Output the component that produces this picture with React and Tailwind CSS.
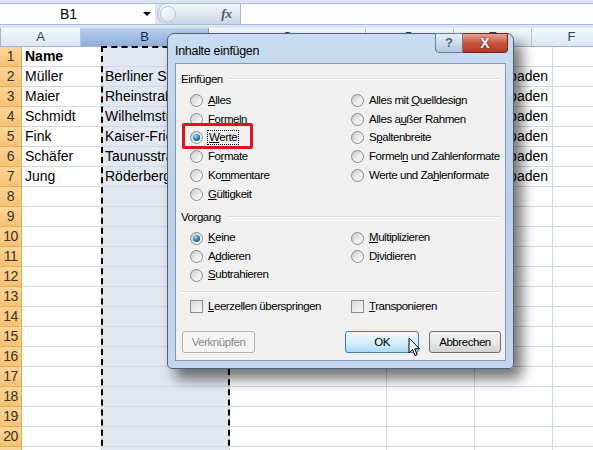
import React from "react";

const SHEET_FONT = { fontFamily: '"Liberation Sans", Arial, sans-serif' };

const COLS = [
  { key: "A", cls: "w-[80px]" },
  { key: "B", cls: "w-[128px]" },
  { key: "C", cls: "w-[157px]" },
  { key: "D", cls: "w-[88px]" },
  { key: "E", cls: "w-[78px]" },
  { key: "F", cls: "w-[80px]" },
];

const ROWS = [
  { a: "Name", b: "", e: "", bold: true },
  { a: "Müller", b: "Berliner Straße 12", e: "Wiesbaden" },
  { a: "Maier", b: "Rheinstraße 4", e: "Wiesbaden" },
  { a: "Schmidt", b: "Wilhelmstraße 9", e: "Wiesbaden" },
  { a: "Fink", b: "Kaiser-Friedrich-Ring 3", e: "Wiesbaden" },
  { a: "Schäfer", b: "Taunusstraße 21", e: "Wiesbaden" },
  { a: "Jung", b: "Röderbergweg 7", e: "Wiesbaden" },
];

function FormulaBar() {
  return (
    <div className="h-[28px] bg-[#dbe5f1] pt-[3px]">
      <div className="flex h-[22px] border-y border-[#a9bdd6]">
        <div className="relative flex w-[155px] items-center justify-center bg-white pr-[18px] text-[14px] text-black">
          B1
          <span className="absolute right-[4px] top-[8px] h-0 w-0 border-x-[4px] border-t-[4px] border-x-transparent border-t-black" />
        </div>
        <div className="w-[2px] bg-[#dbe5f1]" />
        <div className="flex w-[83px] items-center rounded-l-full border-l border-[#a5b9d1] bg-gradient-to-b from-[#f4f7fb] to-[#c7d5e8] pl-[2px] pr-[8px]">
          <span className="h-[16px] w-[16px] rounded-full border border-[#b7c7db] bg-gradient-to-br from-white to-[#d7e1ee]" />
          <span className="ml-auto text-[13px] font-bold italic text-[#555]" style={{ fontFamily: '"Liberation Serif", serif' }}>
            fx
          </span>
        </div>
        <div className="flex-1 border-l border-[#a5b9d1] bg-white" />
      </div>
    </div>
  );
}

function HeaderRow() {
  return (
    <div className="flex h-[19px] border-b border-[#9eb6ce]">
      <div className="relative w-[22px] border-r border-[#9eb6ce] bg-gradient-to-b from-[#e9eff7] to-[#d5dfed]">
        <span className="absolute bottom-[2px] right-[2px] h-0 w-0 border-b-[11px] border-l-[11px] border-b-[#b5c4d7] border-l-transparent" />
      </div>
      {COLS.map((c) => (
        <div
          key={c.key}
          className={`${c.cls} flex shrink-0 items-center justify-center border-r text-[13px] ${
            c.key === "B"
              ? "border-[#7f9dc6] bg-gradient-to-b from-[#b9cfec] to-[#8eaedb] text-[#15294b]"
              : "border-[#b6c7dc] bg-gradient-to-b from-[#f5f8fc] to-[#dce5f1] text-[#27415f]"
          }`}
        >
          {c.key}
        </div>
      ))}
    </div>
  );
}

function Row({ n, data }) {
  return (
    <div className="flex h-[20px] text-[14px]">
      <div className="flex w-[22px] shrink-0 items-center justify-center border-b border-r border-[#e0ad5c] bg-gradient-to-b from-[#fbd598] to-[#f6c274] text-[14px] tracking-[-0.5px] text-[#3d3220]">
        {n}
      </div>
      {COLS.map((c) => {
        let text = "";
        if (data) {
          if (c.key === "A") text = data.a;
          if (c.key === "B") text = data.b;
          if (c.key === "E") text = data.e;
        }
        return (
          <div
            key={c.key}
            className={`${c.cls} flex shrink-0 items-center overflow-hidden whitespace-nowrap border-b border-r border-[#d0d7e5] pl-[3px] ${
              c.key === "B" ? "bg-[#e2e7f0]" : "bg-white"
            } ${data && data.bold && c.key === "A" ? "font-bold" : ""}`}
          >
            {text}
          </div>
        );
      })}
    </div>
  );
}

function Radio({ checked }) {
  return (
    <span className="flex h-[13px] w-[13px] shrink-0 items-center justify-center rounded-full border border-[#8c8c8c] bg-gradient-to-br from-[#c8c8c8] via-[#e9e9e9] to-white">
      {checked && (
        <span className="h-[7px] w-[7px] rounded-full bg-[radial-gradient(circle_at_35%_30%,#9edbff,#2a82c8_50%,#0b3a66)]" />
      )}
    </span>
  );
}

function Check() {
  return (
    <span className="h-[13px] w-[13px] shrink-0 border border-[#8c8c8c] bg-gradient-to-br from-[#d8d8d8] to-[#fafafa]" />
  );
}

function Opt({ children, checked, focus }) {
  return (
    <div className="flex h-[18.8px] items-center gap-[5px]">
      <Radio checked={checked} />
      <span className={focus ? "outline outline-1 outline-dotted outline-black px-[1px] leading-[13px]" : ""}>{children}</span>
    </div>
  );
}

function GroupLabel({ children }) {
  return (
    <div className="flex items-center gap-[6px] pl-[5px] pr-[4px]">
      <span className="leading-[14px]">{children}</span>
      <span className="h-[2px] flex-1 border-b border-t border-b-white border-t-[#d5dfe5]" />
    </div>
  );
}

function Dialog() {
  return (
    <div
      className="absolute left-[167px] top-[33px] flex h-[336px] w-[347px] flex-col rounded-t-[7px] rounded-b-[5px] border border-[#4f6077] bg-gradient-to-b from-[#c9dcf1] via-[#b9d0ea] to-[#c2d7ee] px-[7px] pb-[7px] shadow-[8px_10px_14px_rgba(0,0,0,0.55)]"
      style={{ fontFamily: '"Liberation Sans", Arial, sans-serif' }}
    >
      <div className="flex h-[29px] items-start">
        <span className="mt-[8px] text-[12.5px] tracking-[-0.3px] text-black">Inhalte einfügen</span>
        <div className="-mt-px ml-auto -mr-[2px] flex">
          <div className="flex h-[20px] w-[28px] items-center justify-center rounded-bl-[4px] border border-[#6a7b92] bg-gradient-to-b from-[#e6eef8] to-[#b4c7df] text-[13px] font-bold text-[#4b5c74]">
            ?
          </div>
          <div className="flex h-[20px] w-[45px] items-center justify-center rounded-br-[4px] border border-l-0 border-[#6b2a20] bg-gradient-to-b from-[#e8a595] via-[#c9523e] to-[#b23a25] text-[14px] font-bold text-white [text-shadow:0_0_2px_#5a1208]">
            X
          </div>
        </div>
      </div>
      <div className="relative flex-1 border border-[#8498b3] bg-[#f0f0f0] text-[11.5px] tracking-[-0.45px] text-black">
        <div className="mt-[8px]">
          <GroupLabel>Einfügen</GroupLabel>
        </div>
        <div className="mt-[5px] flex pl-[14px]">
          <div className="w-[161px]">
            <Opt><u>A</u>lles</Opt>
            <Opt>F<u>o</u>rmeln</Opt>
            <Opt checked focus><u>W</u>erte</Opt>
            <Opt>Fo<u>r</u>mate</Opt>
            <Opt>Ko<u>m</u>mentare</Opt>
            <Opt><u>G</u>ültigkeit</Opt>
          </div>
          <div>
            <Opt>Alles mit <u>Q</u>uelldesign</Opt>
            <Opt>Alles a<u>u</u>ßer Rahmen</Opt>
            <Opt>S<u>p</u>altenbreite</Opt>
            <Opt>Formel<u>n</u> und Zahlenformate</Opt>
            <Opt>Werte und Za<u>h</u>lenformate</Opt>
          </div>
        </div>
        <div className="mt-[6px]">
          <GroupLabel>Vorgang</GroupLabel>
        </div>
        <div className="mt-[5px] flex pl-[14px]">
          <div className="w-[161px] [&>div]:h-[18.5px]">
            <Opt checked><u>K</u>eine</Opt>
            <Opt>A<u>d</u>dieren</Opt>
            <Opt><u>S</u>ubtrahieren</Opt>
          </div>
          <div className="[&>div]:h-[18.5px]">
            <Opt><u>M</u>ultiplizieren</Opt>
            <Opt>D<u>i</u>vidieren</Opt>
          </div>
        </div>
        <div className="mx-[5px] mr-[4px] mt-[7px] h-[2px] border-b border-t border-b-white border-t-[#d5dfe5]" />
        <div className="mt-[4px] flex h-[19px] items-center pl-[14px]">
          <div className="flex w-[161px] items-center gap-[5px]">
            <Check />
            <span><u>L</u>eerzellen überspringen</span>
          </div>
          <div className="flex items-center gap-[5px]">
            <Check />
            <span><u>T</u>ransponieren</span>
          </div>
        </div>
        <div className="mt-[15px] flex pl-[6px]">
          <div className="flex h-[22px] w-[73px] items-center justify-center rounded-[3px] border border-[#adb2b5] bg-[#f4f4f4] text-[#8a8a8a]">
            Verknüpfen
          </div>
          <div className="ml-[90px] flex h-[22px] w-[74px] items-center justify-center rounded-[3px] border border-[#3c7fb1] bg-gradient-to-b from-[#ecf7fd] via-[#d9f0fc] to-[#a9daf5]">
            OK
          </div>
          <div className="ml-[10px] flex h-[22px] w-[72px] items-center justify-center rounded-[3px] border border-[#707070] bg-gradient-to-b from-[#f3f3f3] via-[#e8e8e8] to-[#d3d3d3]">
            Abbrechen
          </div>
        </div>
        <div className="pointer-events-none absolute left-[6px] top-[59px] h-[26px] w-[71px] rounded-[2px] border-[3px] border-[#e0121c]" />
        <svg className="pointer-events-none absolute left-[232px] top-[273px]" width="13" height="21" viewBox="0 0 13 21">
          <path d="M1 1 L1 16 L4.5 12.5 L7 18.5 L9.2 17.6 L6.8 11.8 L11.5 11.8 Z" fill="white" stroke="black" strokeWidth="1" strokeLinejoin="round" />
        </svg>
      </div>
    </div>
  );
}

export default function App() {
  const rows = Array.from({ length: 21 }, (_, i) => i + 1);
  return (
    <div className="relative h-[450px] w-[593px] overflow-hidden bg-white" style={SHEET_FONT}>
      <FormulaBar />
      <HeaderRow />
      {rows.map((n) => (
        <Row key={n} n={n} data={ROWS[n - 1]} />
      ))}
      <div className="pointer-events-none absolute left-[101px] top-[46px] h-[420px] w-[129px] border-[2px] border-dashed border-black" />
      <Dialog />
    </div>
  );
}
